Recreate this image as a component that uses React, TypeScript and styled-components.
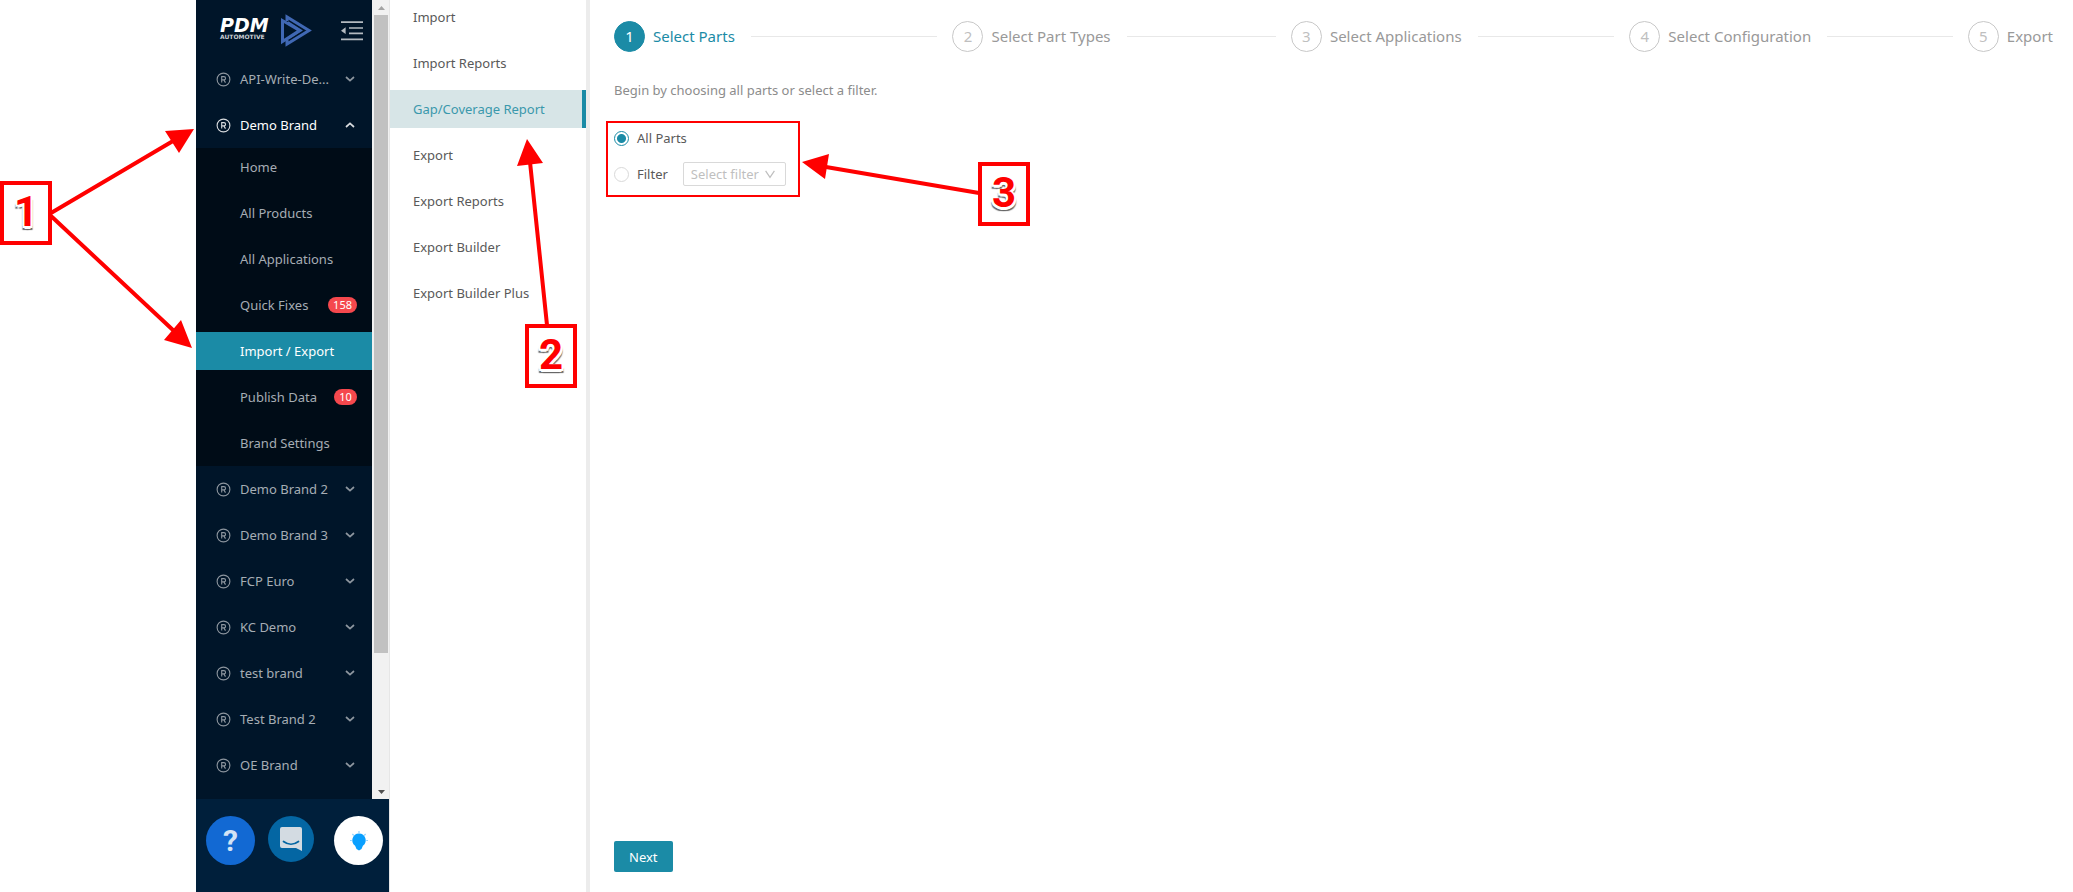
import React from 'react';
import styled, { createGlobalStyle, css } from 'styled-components';

const TEAL = '#1b8ba6';
const RED = '#ff0000';

const GlobalStyle = createGlobalStyle`
  *, *::before, *::after { box-sizing: border-box; }
  html, body, #root { height: 100%; }
  body {
    margin: 0;
    background: #fff;
    color: #595959;
    font-family: 'Noto Sans', 'Open Sans', sans-serif;
    font-size: 13px;
    line-height: 20px;
  }
  a { color: inherit; text-decoration: none; }
  ul, ol { list-style: none; margin: 0; padding: 0; }
  button, select { font: inherit; }
`;

const Page = styled.div`
  position: relative;
  display: grid;
  grid-template-columns: 196px 193px 201px minmax(0, 1fr);
  min-height: 100vh;
  overflow: hidden;
`;

const Sidebar = styled.aside`
  grid-column: 2;
  display: flex;
  flex-direction: column;
  background: #001f3b;
  color: #a6adb4;
`;

const SidebarScroll = styled.div`
  flex: 1;
  display: flex;
  min-height: 0;
`;

const SidebarBody = styled.div`
  flex: 1;
  min-width: 0;
  background: #001529;
`;

const SidebarHead = styled.header`
  display: flex;
  align-items: center;
  justify-content: space-between;
  height: 60px;
  padding: 2px 9px 0 23px;
`;

const IconButton = styled.button`
  display: flex;
  padding: 0;
  border: 0;
  background: none;
  color: #b4bac0;
  cursor: pointer;
`;

const BrandRow = styled.button<{ $open?: boolean }>`
  display: flex;
  align-items: center;
  gap: 9px;
  width: 100%;
  height: 38px;
  margin-bottom: ${(p) => (p.$open ? 4 : 8)}px;
  padding: 0 17px 0 20px;
  border: 0;
  background: none;
  color: ${(p) => (p.$open ? '#fff' : '#a6adb4')};
  text-align: left;
  cursor: pointer;
  svg { flex: none; opacity: 0.85; }
`;

const BrandName = styled.span`
  flex: 1;
  white-space: nowrap;
`;

const SubMenu = styled.ul`
  display: flex;
  flex-direction: column;
  gap: 8px;
  margin-bottom: 4px;
  padding-bottom: 4px;
  background: #000c17;
`;

const SubLink = styled.a<{ $active?: boolean }>`
  display: flex;
  align-items: center;
  justify-content: space-between;
  height: 38px;
  padding: 0 15px 0 44px;
  ${(p) => p.$active && css`
    background: ${TEAL};
    color: #fff;
  `}
`;

const Badge = styled.span`
  min-width: 23px;
  padding: 0 5px;
  border-radius: 8px;
  background: #f5484d;
  color: #fff;
  font-size: 11px;
  line-height: 16px;
  text-align: center;
`;

const ScrollTrack = styled.div`
  display: flex;
  flex-direction: column;
  width: 17px;
  padding: 0 1px 0 2px;
  background: #f1f1f1;
`;

const ScrollArrow = styled.span`
  display: flex;
  align-items: center;
  justify-content: center;
  height: 15px;
`;

const ScrollSpace = styled.div`
  flex: 1;
`;

const ScrollThumb = styled.div`
  height: 83%;
  background: #c1c1c1;
`;

const SidebarFoot = styled.footer`
  display: flex;
  gap: 13px;
  align-items: flex-start;
  height: 93px;
  padding: 17px 6px 0 10px;
  > :last-child { margin-left: auto; }
`;

const RoundButton = styled.button<{ $bg: string; $small?: boolean }>`
  display: flex;
  align-items: center;
  justify-content: center;
  width: ${(p) => (p.$small ? 46 : 49)}px;
  height: ${(p) => (p.$small ? 46 : 49)}px;
  padding: 0;
  border: 0;
  border-radius: 50%;
  background: ${(p) => p.$bg};
  color: #d3e3f5;
  font: 700 30px/48px Roboto, sans-serif;
  cursor: pointer;
`;

const SectionNav = styled.nav`
  border-right: 4px solid #ececec;
  border-left: 1px solid #e6e6e6;
`;

const SectionList = styled.ul`
  display: flex;
  flex-direction: column;
  gap: 8px;
  margin-top: -2px;
`;

const SectionLink = styled.a<{ $active?: boolean }>`
  display: flex;
  align-items: center;
  height: 38px;
  padding-left: 23px;
  ${(p) => p.$active && css`
    border-right: 4px solid ${TEAL};
    background: #d7e5e7;
    color: #3a98ac;
  `}
`;

const Main = styled.main`
  display: flex;
  flex-direction: column;
  align-items: flex-start;
  padding: 20px 20px 20px 24px;
`;

const Steps = styled.ol`
  display: flex;
  align-self: stretch;
`;

const Step = styled.li<{ $active?: boolean }>`
  display: flex;
  flex: 1 0 0;
  align-items: center;
  color: ${(p) => (p.$active ? TEAL : '#999')};
  font-size: 15px;
  line-height: 32px;
  white-space: nowrap;
  &:last-child { flex: none; }
  &:not(:last-child)::after {
    content: '';
    flex: 1;
    height: 1px;
    margin: 0 15px 0 16px;
    background: #e8e8e8;
  }
`;

const StepNumber = styled.span<{ $active?: boolean }>`
  width: 31px;
  height: 31px;
  margin-right: 8px;
  border: 1px solid ${(p) => (p.$active ? TEAL : '#c8c8c8')};
  border-radius: 50%;
  background: ${(p) => (p.$active ? TEAL : '#fff')};
  color: ${(p) => (p.$active ? '#fff' : '#bfbfbf')};
  line-height: 29px;
  text-align: center;
`;

const Intro = styled.p`
  margin: 28px 0 27px;
  color: #8c8c8c;
`;

const Choices = styled.div`
  display: flex;
  flex-direction: column;
  gap: 14px;
`;

const Choice = styled.div`
  display: flex;
  align-items: center;
  height: 22px;
`;

const Radio = styled.input`
  appearance: none;
  width: 15px;
  height: 15px;
  margin: 0 8px 0 0;
  border: 1px solid #d9d9d9;
  border-radius: 50%;
  &:checked {
    border-color: ${TEAL};
    background: radial-gradient(circle, ${TEAL} 4px, #fff 5px);
  }
`;

const FilterBox = styled.div`
  display: grid;
  align-items: center;
  width: 103px;
  margin-left: 15px;
  color: #bfbfbf;
  > * { grid-area: 1 / 1; }
  > svg { justify-self: end; margin-right: 11px; pointer-events: none; }
`;

const FilterSelect = styled.select`
  appearance: none;
  width: 100%;
  height: 24px;
  padding: 0 7px;
  border: 1px solid #d9d9d9;
  border-radius: 2px;
  background: #fff;
  color: inherit;
`;

const NextButton = styled.button`
  height: 31px;
  margin-top: auto;
  padding: 0 15px;
  border: 0;
  border-radius: 2px;
  background: ${TEAL};
  color: #fff;
  cursor: pointer;
`;

const Annotations = styled.svg`
  position: absolute;
  top: 0;
  left: 0;
  pointer-events: none;
`;

const Callout = styled.div<{ $x: number; $y: number }>`
  position: absolute;
  top: ${(p) => p.$y}px;
  left: ${(p) => p.$x}px;
  width: 52px;
  height: 64px;
  border: 4px solid ${RED};
  background: #fff;
  color: ${RED};
  font: 700 42px/54px Roboto, sans-serif;
  text-align: center;
  text-shadow: -2px 0 #fff, 2px 0 #fff, -2px 2px #fff, 2px 2px #fff, 0 3px #fff,
    -2px 4px 1px #666, 2px 4px 1px #666;
`;

const Logo = () => (
  <svg width="94" height="34" viewBox="0 0 94 34" role="img" aria-label="PDM Automotive">
    <g fill="#fff" fontFamily="DejaVu Sans, sans-serif" fontWeight="700">
      <text x="1" y="18" fontSize="19" fontStyle="italic">PDM</text>
      <text x="1" y="25" fontSize="6" fill="#c9ced3">AUTOMOTIVE</text>
    </g>
    <g fill="none" stroke="#4068b4" strokeWidth="3">
      <path d="M68 7V3L90 16.500 68 30v-4" />
      <path d="M63.500 6.500V27.500L80.500 16.500Z" />
      <path d="M69 8l13.500 8.500L69 25" strokeWidth="1.500" />
    </g>
  </svg>
);

const Registered = () => (
  <svg width="15" height="15" viewBox="0 0 15 15" fill="none" stroke="currentColor" aria-hidden="true">
    <circle cx="7.5" cy="7.5" r="6.4" strokeWidth="1.1" />
    <path d="M5.7 10.6V4.6h2.2a1.6 1.6 0 0 1 0 3.3H5.7M7.8 7.9l1.7 2.7" strokeWidth="1.1" />
  </svg>
);

const Chevron = ({ up }: { up?: boolean }) => (
  <svg width="10" height="6" viewBox="0 0 10 6" fill="none" stroke="currentColor" strokeWidth="1.7" aria-hidden="true">
    <path d={up ? 'M1 5l4-3.6L9 5' : 'M1 1l4 3.6L9 1'} />
  </svg>
);

const SelectArrow = () => (
  <svg width="10" height="9" viewBox="0 0 10 9" fill="none" stroke="currentColor" strokeWidth="1.2" aria-hidden="true">
    <path d="M.6.8L5 7.400 9.400.8" />
  </svg>
);

const Fold = () => (
  <svg width="22" height="20" viewBox="0 0 22 20" fill="none" aria-hidden="true">
    <path d="M0 1.2h22M8 7h14M8 12.4h14M0 18.4h22" stroke="currentColor" strokeWidth="1.7" />
    <path d="M0 9.7l4.6-3.400v6.800z" fill="currentColor" />
  </svg>
);

const Chat = () => (
  <svg width="24" height="26" viewBox="0 0 24 26" aria-hidden="true">
    <path d="M3 1h18a2 2 0 0 1 2 2v22l-6-3H3a2 2 0 0 1-2-2V3a2 2 0 0 1 2-2z" fill="#d3dbe2" />
    <path d="M4.500 15.500q7.500 5.500 15 0" fill="none" stroke="#0466a3" strokeWidth="1.700" strokeLinecap="round" />
  </svg>
);

const Bulb = () => (
  <svg width="20" height="22" viewBox="0 0 20 22" aria-hidden="true">
    <path d="M10 3.500a6.800 6.800 0 0 1 3.900 12.300L12.500 19 10 20.500 7.500 19l-1.400-3.200A6.800 6.800 0 0 1 10 3.500z" fill="#0aa0ff" />
    <path d="M10 3V1M4.800 5.500L3.400 4M15.200 5.500L16.600 4M2.800 10.500H1M17.200 10.500H19" stroke="#8fd2ff" strokeWidth="1.200" />
  </svg>
);

const Triangle = ({ up }: { up?: boolean }) => (
  <svg width="7" height="4" viewBox="0 0 7 4" aria-hidden="true">
    <path d={up ? 'M0 4l3.500-4L7 4z' : 'M0 0l3.500 4L7 0z'} fill={up ? '#a3a3a3' : '#505050'} />
  </svg>
);

const brandsBelow = ['Demo Brand 2', 'Demo Brand 3', 'FCP Euro', 'KC Demo', 'test brand', 'Test Brand 2', 'OE Brand'];

const subItems: { label: string; badge?: number; active?: boolean }[] = [
  { label: 'Home' },
  { label: 'All Products' },
  { label: 'All Applications' },
  { label: 'Quick Fixes', badge: 158 },
  { label: 'Import / Export', active: true },
  { label: 'Publish Data', badge: 10 },
  { label: 'Brand Settings' },
];

const sections = [
  'Import',
  'Import Reports',
  'Gap/Coverage Report',
  'Export',
  'Export Reports',
  'Export Builder',
  'Export Builder Plus',
];

const steps = ['Select Parts', 'Select Part Types', 'Select Applications', 'Select Configuration', 'Export'];

const Brand = ({ name, open }: { name: string; open?: boolean }) => (
  <BrandRow $open={open} aria-expanded={!!open}>
    <Registered />
    <BrandName>{name}</BrandName>
    <Chevron up={open} />
  </BrandRow>
);

export default function App() {
  return (
    <Page>
      <GlobalStyle />
      <Sidebar>
        <SidebarScroll>
          <SidebarBody>
            <SidebarHead>
              <Logo />
              <IconButton aria-label="Collapse menu"><Fold /></IconButton>
            </SidebarHead>
            <Brand name="API-Write-De..." />
            <Brand name="Demo Brand" open />
            <SubMenu>
              {subItems.map((item) => (
                <li key={item.label}>
                  <SubLink href="#" $active={item.active}>
                    {item.label}
                    {item.badge && <Badge>{item.badge}</Badge>}
                  </SubLink>
                </li>
              ))}
            </SubMenu>
            {brandsBelow.map((name) => <Brand key={name} name={name} />)}
          </SidebarBody>
          <ScrollTrack aria-hidden="true">
            <ScrollArrow><Triangle up /></ScrollArrow>
            <ScrollSpace><ScrollThumb /></ScrollSpace>
            <ScrollArrow><Triangle /></ScrollArrow>
          </ScrollTrack>
        </SidebarScroll>
        <SidebarFoot>
          <RoundButton $bg="#1269d3" aria-label="Help">?</RoundButton>
          <RoundButton $bg="#0466a3" $small aria-label="Chat"><Chat /></RoundButton>
          <RoundButton $bg="#fff" aria-label="Ideas"><Bulb /></RoundButton>
        </SidebarFoot>
      </Sidebar>
      <SectionNav>
        <SectionList>
          {sections.map((label) => (
            <li key={label}>
              <SectionLink href="#" $active={label === 'Gap/Coverage Report'}>{label}</SectionLink>
            </li>
          ))}
        </SectionList>
      </SectionNav>
      <Main>
        <Steps>
          {steps.map((label, i) => (
            <Step key={label} $active={i === 0}>
              <StepNumber $active={i === 0}>{i + 1}</StepNumber>
              {label}
            </Step>
          ))}
        </Steps>
        <Intro>Begin by choosing all parts or select a filter.</Intro>
        <Choices>
          <Choice>
            <Radio type="radio" name="parts" id="all" defaultChecked />
            <label htmlFor="all">All Parts</label>
          </Choice>
          <Choice>
            <Radio type="radio" name="parts" id="filter" />
            <label htmlFor="filter">Filter</label>
            <FilterBox>
              <FilterSelect aria-label="Select filter"><option>Select filter</option></FilterSelect>
              <SelectArrow />
            </FilterBox>
          </Choice>
        </Choices>
        <NextButton>Next</NextButton>
      </Main>
      <Annotations width="1040" height="400" viewBox="0 0 1040 400" aria-hidden="true">
        <g fill="none" stroke={RED} strokeWidth="4">
          <path d="M51 213L173 141M51 216L174 331M547 325L530 162M979 193L826 167" />
          <rect x="607" y="122" width="192" height="74" strokeWidth="2" />
        </g>
        <path
          d="M194 129L165 131 179 153zM192 348L164 340 181 320zM527 139L517 166 543 163zM802 162L829 154 825 179z"
          fill={RED}
        />
      </Annotations>
      <Callout $x={0} $y={181}>1</Callout>
      <Callout $x={525} $y={324}>2</Callout>
      <Callout $x={978} $y={162}>3</Callout>
    </Page>
  );
}
